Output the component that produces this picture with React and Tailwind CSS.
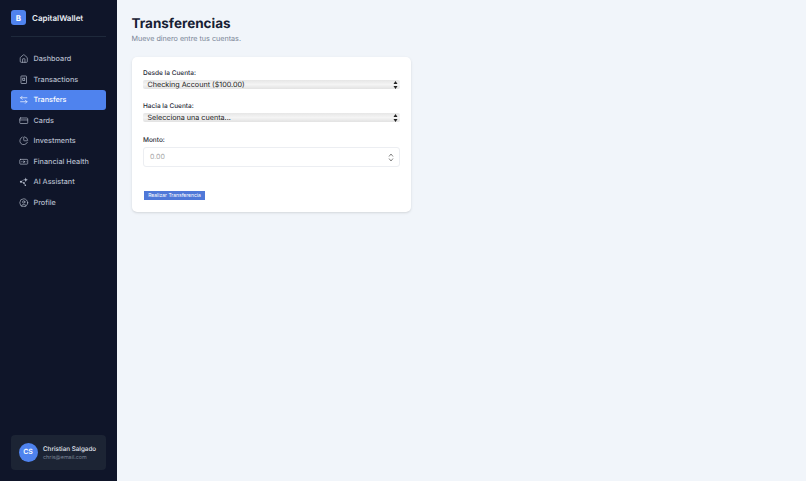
import { Home, ArrowLeftRight, CreditCard, ChartPie, Banknote, CircleUser } from "lucide-react";

function ReceiptBox(props) {
	return (
		<svg {...props} viewBox="0 0 24 24" fill="none" stroke="currentColor" strokeWidth="1.8">
			<rect x="5" y="2.5" width="14" height="19" rx="1.5" />
			<rect x="9.5" y="8" width="5" height="6" />
		</svg>
	);
}

function AiNodes(props) {
	return (
		<svg {...props} viewBox="0 0 24 24" fill="currentColor">
			<path d="M17 1.5 L18.6 5.4 L22.5 7 L18.6 8.6 L17 12.5 L15.4 8.6 L11.5 7 L15.4 5.4 Z" />
			<circle cx="5" cy="12" r="2.8" />
			<circle cx="12.5" cy="15" r="2.2" />
			<circle cx="16" cy="21" r="2" />
			<path d="M5 12 L12.5 7 M5 12 L12.5 15 L16 21" stroke="currentColor" strokeWidth="1.2" fill="none" />
		</svg>
	);
}

const navItems = [
	{ label: "Dashboard", icon: Home },
	{ label: "Transactions", icon: ReceiptBox },
	{ label: "Transfers", icon: ArrowLeftRight, active: true },
	{ label: "Cards", icon: CreditCard },
	{ label: "Investments", icon: ChartPie },
	{ label: "Financial Health", icon: Banknote },
	{ label: "AI Assistant", icon: AiNodes },
	{ label: "Profile", icon: CircleUser },
];

function SelectField({ label, value }) {
	return (
		<div>
			<label className="block text-[6.5px] leading-[10px] font-medium text-[#1f2937] mb-[2.5px]">{label}</label>
			<div className="relative h-[9px] flex items-center rounded-[2px] bg-gradient-to-b from-[#e6e6e6] via-[#f4f4f4] to-[#e2e2e2] pl-[4.5px]">
				<span className="text-[7.2px] leading-[9px] text-[#1a1a1a]">{value}</span>
				<svg className="absolute right-[2px] top-[1px]" width="5" height="8" viewBox="0 0 5 8">
					<path d="M2.5 0 L4.5 3 H0.5 Z M2.5 8 L4.5 5 H0.5 Z" fill="#222" />
				</svg>
			</div>
		</div>
	);
}

export default function App() {
	return (
		<div className="flex h-screen bg-[#f1f5fa] font-['Inter',sans-serif] antialiased [text-rendering:geometricPrecision]">
			{/* Sidebar */}
			<aside className="flex flex-col w-[116.5px] flex-none bg-[#0f1529] px-[11px]">
				<div className="flex items-center gap-[6px] h-[37px] border-b border-[#1e293b] pb-[1px]">
					<div className="flex items-center justify-center w-[15px] h-[15px] rounded-[3px] bg-[#4f83ee] text-white text-[8px] font-bold">B</div>
					<span className="text-[8px] font-semibold text-[#e8ecf2] whitespace-nowrap">CapitalWallet</span>
				</div>
				<nav className="flex flex-col mt-[11.5px]">
					{navItems.map((item) => {
						const Icon = item.icon;
						return (
							<div
								key={item.label}
								className={`flex items-center gap-[5px] h-[20.5px] px-[8px] rounded-[3px] text-[7.25px] font-medium whitespace-nowrap ${
									item.active ? "bg-[#4f83ee] text-white" : "text-[#b4bccb]"
								}`}
							>
								<Icon width={9.5} height={9.5} strokeWidth={1.7} className="flex-none" />
								<span className="mt-[2px]">{item.label}</span>
							</div>
						);
					})}
				</nav>
				<div className="mt-auto mb-[11px] flex items-center gap-[5.5px] h-[35px] px-[7.5px] rounded-[4px] bg-[#1c2434]">
					<div className="flex flex-none items-center justify-center w-[19px] h-[19px] rounded-full bg-[#4f83ee] text-white text-[7px] font-semibold">CS</div>
					<div className="whitespace-nowrap mt-[3px]">
						<div className="text-[6.3px] leading-[9px] font-medium text-[#e2e8f0]">Christian Salgado</div>
						<div className="text-[5.4px] leading-[9px] text-[#7c8799]">chris@email.com</div>
					</div>
				</div>
			</aside>

			{/* Main */}
			<main className="flex-1 pl-[15px] pt-[15px]">
				<h1 className="text-[13.5px] leading-[18px] font-bold text-[#172033]">Transferencias</h1>
				<p className="text-[7.2px] leading-[11px] text-[#7a8597]">Mueve dinero entre tus cuentas.</p>

				<div className="w-[279.5px] h-[155px] mt-[12.5px] bg-white rounded-[5px] shadow-sm pt-[11px] px-[11.5px]">
					<SelectField label="Desde la Cuenta:" value="Checking Account ($100.00)" />
					<div className="mt-[11.5px]">
						<SelectField label="Hacia la Cuenta:" value="Selecciona una cuenta..." />
					</div>
					<div className="mt-[12.5px]">
						<label className="block text-[6.5px] leading-[10px] font-medium text-[#1f2937] mb-[2.5px]">Monto:</label>
						<div className="relative flex items-center h-[19.5px] rounded-[3px] border border-[#eceef2] pl-[6px]">
							<span className="text-[7px] text-[#a8a8a8]">0.00</span>
							<svg className="absolute right-[5px] top-[5px]" width="6" height="9" viewBox="0 0 6 9" fill="none" stroke="#666" strokeWidth="0.8">
								<path d="M1 3.5 L3 1 L5 3.5 M1 5.5 L3 8 L5 5.5" />
							</svg>
						</div>
					</div>
					<button className="block mt-[24px] ml-[1px] h-[9px] w-[61px] bg-[#4f78d8] text-white text-[5px] leading-[9px] text-center">Realizar Transferencia</button>
				</div>
			</main>
		</div>
	);
}
